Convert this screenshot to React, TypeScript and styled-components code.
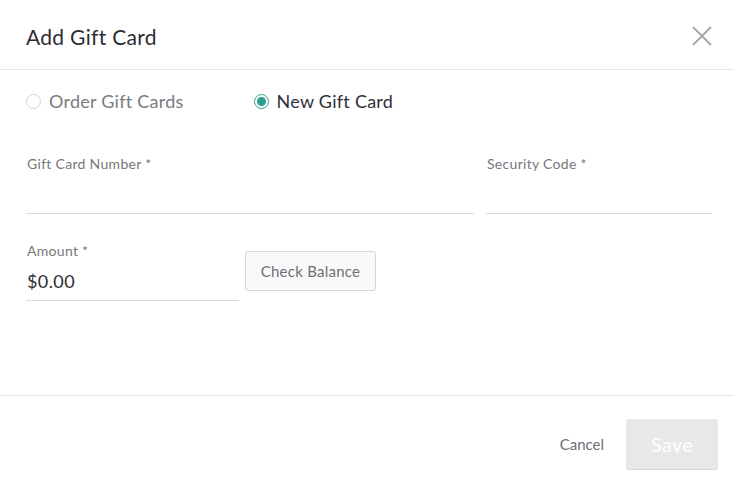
import React from 'react';
import styled, { createGlobalStyle } from 'styled-components';

const GlobalStyle = createGlobalStyle`
  *, *::before, *::after {
    box-sizing: border-box;
  }
  html, body {
    margin: 0;
    padding: 0;
    background: #fff;
  }
  body {
    font-family: Lato, "Open Sans", "Liberation Sans", sans-serif;
    -webkit-font-smoothing: antialiased;
  }
`;

const Modal = styled.div`
  width: 734px;
  height: 486px;
  display: flex;
  flex-direction: column;
  background: #fff;
  overflow: hidden;
`;

const Header = styled.div`
  height: 70px;
  flex-shrink: 0;
  border-bottom: 1px solid #e6e6e6;
  display: flex;
  align-items: center;
  justify-content: space-between;
  padding: 3px 21px 0 26px;
`;

const Title = styled.h1`
  margin: 0;
  font-size: 21px;
  font-weight: 400;
  color: #2d2d33;
  letter-spacing: 0.3px;
`;

const CloseButton = styled.button`
  border: 0;
  background: none;
  padding: 0;
  width: 22px;
  height: 22px;
  display: flex;
  align-items: center;
  justify-content: center;
  cursor: pointer;
`;

const Body = styled.div`
  flex: 1;
  padding: 21px 22px 0 26px;
  display: flex;
  flex-direction: column;
  border-bottom: 1px solid #e6e6e6;
`;

const RadioRow = styled.div`
  display: flex;
  align-items: center;
  gap: 70px;
  height: 20px;
`;

const RadioLabel = styled.label<{ $checked?: boolean }>`
  display: flex;
  align-items: center;
  gap: 8px;
  font-size: 18px;
  letter-spacing: 0.25px;
  color: ${p => (p.$checked ? '#2f2f3a' : '#7b7b80')};
  cursor: pointer;
`;

const RadioCircle = styled.span<{ $checked?: boolean }>`
  width: 15px;
  height: 15px;
  flex-shrink: 0;
  border-radius: 50%;
  border: 1.5px solid ${p => (p.$checked ? '#2aa190' : '#d4d4d4')};
  display: flex;
  align-items: center;
  justify-content: center;
  &::after {
    content: '';
    width: 9px;
    height: 9px;
    border-radius: 50%;
    background: ${p => (p.$checked ? '#2aa190' : 'transparent')};
  }
`;

const FieldGrid = styled.div`
  display: grid;
  grid-template-columns: 448px 226px;
  column-gap: 12px;
  margin-top: 44px;
`;

const Field = styled.div<{ $width?: number }>`
  display: flex;
  flex-direction: column;
  flex-shrink: 0;
  width: ${p => (p.$width ? `${p.$width}px` : 'auto')};
`;

const Label = styled.label`
  font-size: 14px;
  letter-spacing: 0.3px;
  color: #77777c;
  height: 17px;
  line-height: 17px;
  padding-left: 1px;
`;

const Input = styled.input`
  border: 0;
  border-bottom: 1px solid #d9d9d9;
  outline: none;
  height: 42px;
  padding: 0 0 0 1px;
  margin: 0;
  font-family: inherit;
  font-size: 18px;
  letter-spacing: 0.4px;
  color: #2d2d33;
  background: transparent;
`;

const AmountRow = styled.div`
  display: flex;
  align-items: flex-start;
  gap: 6px;
  margin-top: 28px;
`;

const AmountInput = styled(Input)`
  height: 42px;
  padding-top: 3px;
`;

const CheckButton = styled.button`
  margin-top: 9px;
  width: 131px;
  height: 40px;
  border: 1px solid #d7d7d7;
  border-radius: 3px;
  background: #f9f9f9;
  font-family: inherit;
  font-size: 15px;
  letter-spacing: 0.25px;
  color: #6f6f74;
  cursor: pointer;
`;

const Footer = styled.div`
  height: 90px;
  flex-shrink: 0;
  display: flex;
  align-items: flex-start;
  justify-content: flex-end;
  padding: 23px 16px 0 0;
  gap: 22px;
`;

const CancelButton = styled.button`
  border: 0;
  background: none;
  font-family: inherit;
  font-size: 15px;
  color: #6f6f74;
  height: 50px;
  padding: 0;
  cursor: pointer;
`;

const SaveButton = styled.button`
  width: 92px;
  height: 50px;
  border: 0;
  border-radius: 3px;
  background: #e8e8e8;
  box-shadow: 0 1px 0 #d6d6d6;
  color: #fff;
  font-family: inherit;
  font-size: 20px;
  letter-spacing: 0.3px;
  cursor: default;
`;

export default function App() {
  return (
    <>
      <GlobalStyle />
      <Modal>
        <Header>
          <Title>Add Gift Card</Title>
          <CloseButton aria-label="Close">
            <svg width="20" height="20" viewBox="0 0 20 20">
              <path d="M1 1 L19 19 M19 1 L1 19" stroke="#a8a8a8" strokeWidth="2" fill="none" />
            </svg>
          </CloseButton>
        </Header>
        <Body>
          <RadioRow>
            <RadioLabel>
              <RadioCircle />
              Order Gift Cards
            </RadioLabel>
            <RadioLabel $checked>
              <RadioCircle $checked />
              New Gift Card
            </RadioLabel>
          </RadioRow>
          <FieldGrid>
            <Field>
              <Label>Gift Card Number *</Label>
              <Input />
            </Field>
            <Field>
              <Label>Security Code *</Label>
              <Input />
            </Field>
          </FieldGrid>
          <AmountRow>
            <Field $width={213}>
              <Label>Amount *</Label>
              <AmountInput defaultValue="$0.00" />
            </Field>
            <CheckButton>Check Balance</CheckButton>
          </AmountRow>
        </Body>
        <Footer>
          <CancelButton>Cancel</CancelButton>
          <SaveButton disabled>Save</SaveButton>
        </Footer>
      </Modal>
    </>
  );
}
